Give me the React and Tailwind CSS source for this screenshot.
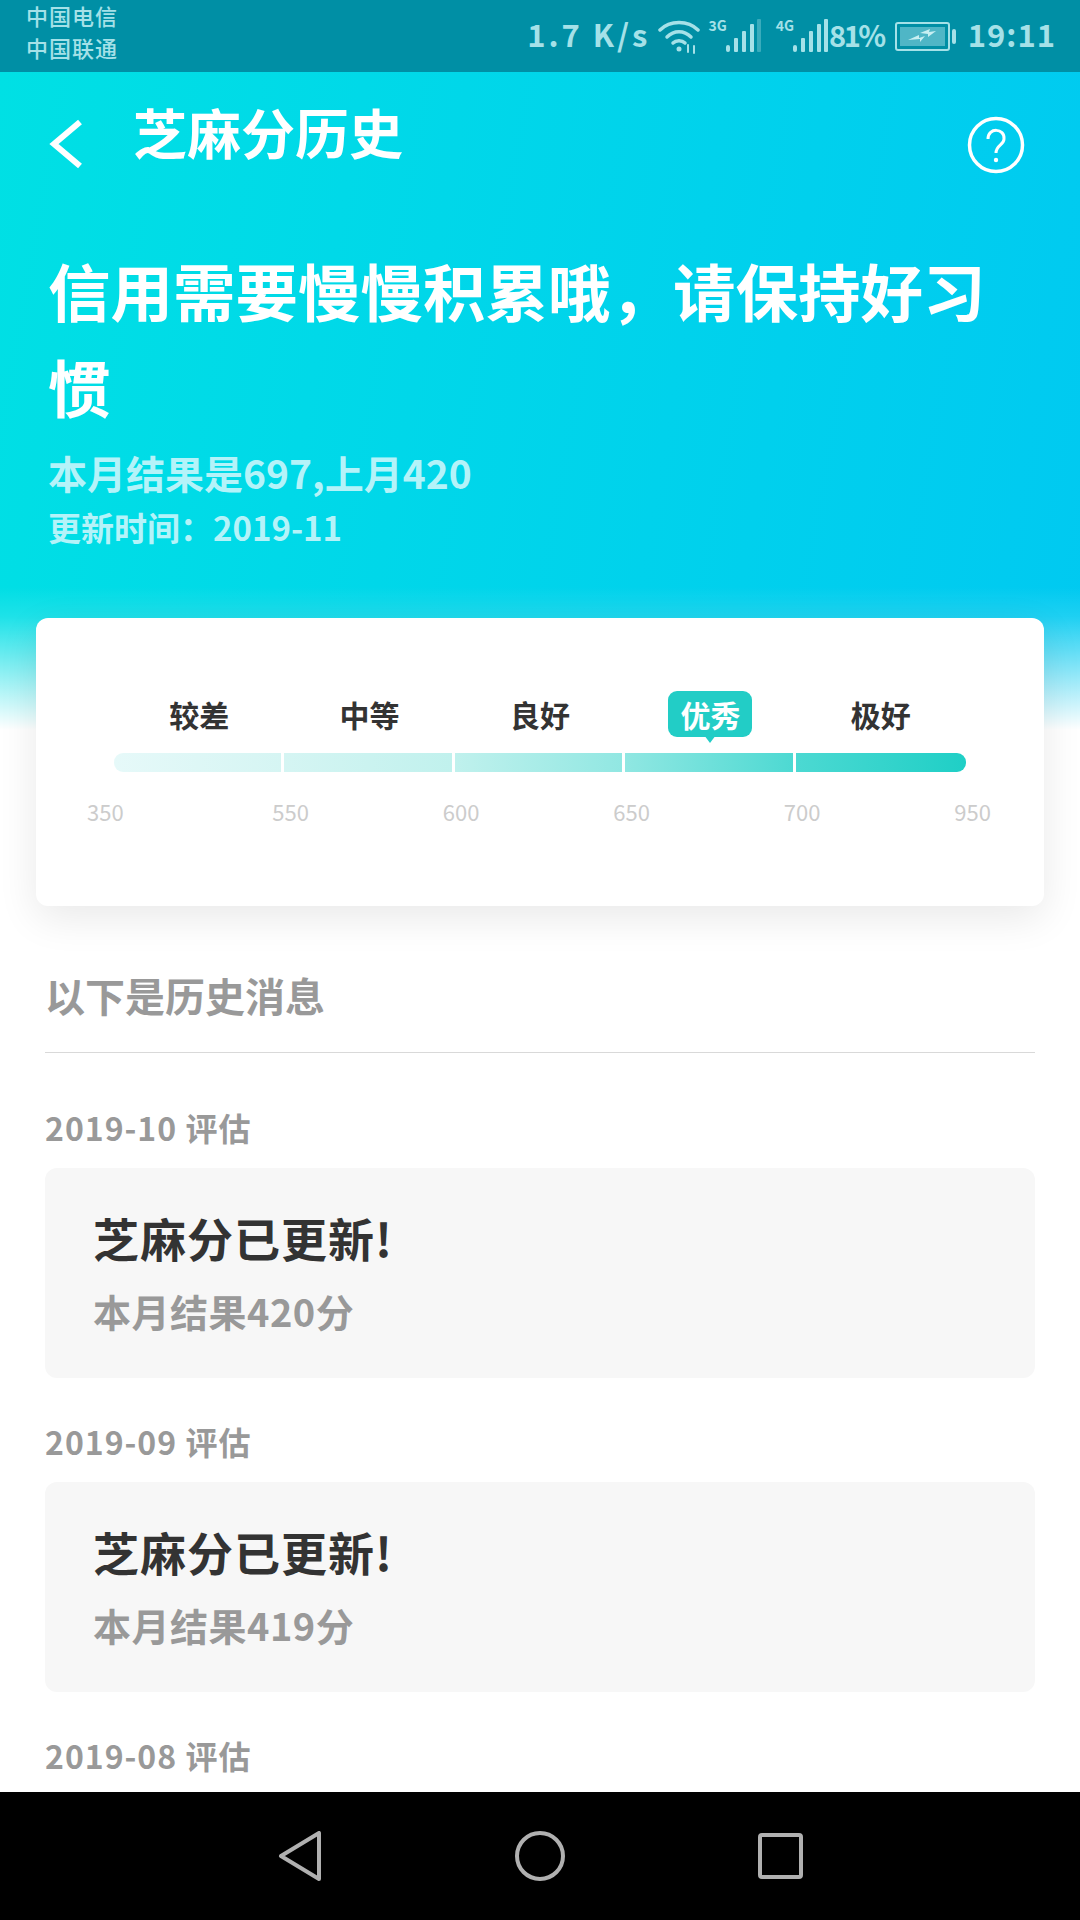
const history = [
  { month: "2019-10 评估", result: "本月结果420分" },
  { month: "2019-09 评估", result: "本月结果419分" },
];

const levels = ["较差", "中等", "良好", "优秀", "极好"];
const ticks = ["550", "600", "650", "700", "950"];

function SignalBars({ dimLast }) {
  return (
    <svg width="36" height="34" viewBox="0 0 36 34" fill="currentColor">
      <rect x="1" y="26" width="4" height="7" rx="2" />
      <rect x="9" y="19" width="4" height="14" rx="1" />
      <rect x="17" y="12" width="4" height="21" rx="1" />
      <rect x="25" y="5" width="4" height="28" rx="1" />
      <rect x="32" y="0" width="4" height="33" rx="1" opacity={dimLast ? 0.35 : 1} />
    </svg>
  );
}

function StatusBar() {
  return (
    <div className="h-[72px] shrink-0 bg-[#008fa5] flex items-center justify-between pl-[26px] pr-[24px] text-[#a5e1e8]">
      <div className="text-[22px] leading-[32px] font-medium tracking-[1px] mb-[10px]">
        <div>中国电信</div>
        <div>中国联通</div>
      </div>
      <div className="flex items-center">
        <span className="text-[31px] leading-none font-bold tracking-[3px] mb-[6px]">1.7 K/s</span>
        <svg className="ml-[8px]" width="42" height="36" viewBox="0 0 42 36" fill="none" stroke="currentColor" strokeWidth="3.5" strokeLinecap="round">
          <path d="M2 12 C12 2 30 2 40 12" />
          <path d="M9 19 C16 12 26 12 33 19" />
          <path d="M15 25 C18 22 24 22 27 25" />
          <circle cx="21" cy="31" r="2.5" fill="currentColor" stroke="none" />
          <path d="M30 34 L30 27 M36 28 L36 35" strokeWidth="2" />
        </svg>
        <span className="ml-[8px] self-start text-[14px] font-bold leading-none">3G</span>
        <span className="-ml-[2px]"><SignalBars dimLast /></span>
        <span className="ml-[15px] self-start text-[14px] font-bold leading-none">4G</span>
        <span className="-ml-[2px]"><SignalBars /></span>
        <span className="text-[29px] leading-none font-bold ml-[1px] tracking-[-2.5px] mb-[4px]">81%</span>
        <div className="ml-[11px] w-[55px] h-[29px] rounded-[3px] border-2 border-[#a5e1e8] p-[3px]">
          <div className="h-full w-[45px] bg-[#4fb6c6] flex items-center justify-center">
            <svg width="32" height="16" viewBox="0 0 32 16" fill="#c8eff2">
              <path d="M2 12 L13 7 L13 10 L19 8 L14 14 L14 11 Z" />
              <path d="M14 5 L24 1 L23 4 L30 3 L22 9 L22 6 Z" />
            </svg>
          </div>
        </div>
        <div className="ml-[2px] w-[4px] h-[15px] rounded-full bg-[#a5e1e8]" />
        <span className="ml-[12px] text-[31px] leading-none font-bold tracking-[1px] mb-[6px]">19:11</span>
      </div>
    </div>
  );
}

function Header() {
  return (
    <div className="h-[658px] shrink-0 pt-[24px] bg-[linear-gradient(to_bottom,rgba(255,255,255,0)_515px,rgba(255,255,255,0.12)_545px,rgba(255,255,255,1)_658px),linear-gradient(100deg,#00e0e4,#00c9f1)]">
      <div className="flex items-center justify-between pl-[48px] pr-[55px] h-[100px]">
        <div className="flex items-center">
          <svg className="mb-[4px]" width="36" height="50" viewBox="0 0 36 50" fill="none" stroke="white" strokeWidth="6">
            <path d="M32 3 L6 25 L32 47" />
          </svg>
          <h1 className="ml-[49px] mb-[28px] text-[54px] font-bold text-white leading-none">芝麻分历史</h1>
        </div>
        <svg className="mb-[2px]" width="58" height="58" viewBox="0 0 58 58" fill="none" stroke="white" strokeWidth="3.5">
          <circle cx="29" cy="29" r="26.5" />
          <path d="M21 23 C21 11 38 12 37 23 C37 29 29 29 29 37" strokeWidth="3" />
          <circle cx="29" cy="44" r="2.2" fill="white" stroke="none" />
        </svg>
      </div>
      <div className="pl-[48px] pr-[60px] mt-[46px]">
        <h2 className="text-[62.5px] leading-[96px] font-bold text-white">信用需要慢慢积累哦，请保持好习惯</h2>
        <p className="text-[39px] leading-[56px] font-bold text-[#b4f3f9] mt-[10px]">本月结果是697,上月420</p>
        <p className="text-[33px] leading-[48px] font-bold text-[#b4f3f9] mt-[3px]">更新时间：2019-11</p>
      </div>
    </div>
  );
}

function ScoreCard() {
  return (
    <div className="relative mx-[36px] -mt-[112px] h-[288px] shrink-0 rounded-[12px] bg-white shadow-[0_12px_40px_rgba(0,0,0,0.09)] px-[78px] pt-[73px]">
      <div className="grid grid-cols-5 h-[46px]">
        {levels.map((level, i) => (
          <div key={level} className="flex justify-center items-center">
            {i === 3 ? (
              <div className="relative w-[84px] h-[46px] rounded-[9px] bg-[#22cdc6] text-white text-[30px] font-bold flex items-center justify-center">
                {level}
                <div className="absolute left-1/2 -translate-x-1/2 top-[44px] w-0 h-0 border-l-[6px] border-r-[6px] border-t-[8px] border-l-transparent border-r-transparent border-t-[#22cdc6]" />
              </div>
            ) : (
              <span className="text-[30px] font-bold text-[#333333]">{level}</span>
            )}
          </div>
        ))}
      </div>
      <div className="mt-[16px] h-[19px] rounded-[9px] overflow-hidden grid grid-cols-5 bg-[linear-gradient(to_right,#e6f9f9,#d5f5f3_20%,#c0f1ed_40%,#90e7e2_60%,#4cd9d2_80%,#1fcfc6)]">
        {levels.map((level, i) => (
          <div key={level} className={i < 4 ? "border-r-[3px] border-white" : ""} />
        ))}
      </div>
      <div className="flex mt-[23px] -ml-[27px] text-[22px] leading-[32px] text-[#cccccc]">
        <span className="w-[40px] text-center">350</span>
        <div className="flex ml-[147px] gap-[130.5px]">
          {ticks.map((tick) => (
            <span key={tick} className="w-[40px] text-center">{tick}</span>
          ))}
        </div>
      </div>
    </div>
  );
}

function HistoryEntry({ item }) {
  return (
    <div className="mb-[40px]">
      <div className="text-[32px] leading-[46px] font-bold text-[#999999] tracking-[1px]">{item.month}</div>
      <div className="mt-[18px] h-[210px] rounded-[12px] bg-[#f7f7f7] pl-[48px] pt-[39px]">
        <div className="text-[46px] leading-[60px] font-bold text-[#333333] tracking-[1px]">芝麻分已更新!</div>
        <div className="mt-[16px] text-[38px] leading-[56px] font-bold text-[#999999] tracking-[0.5px]">{item.result}</div>
      </div>
    </div>
  );
}

function NavBar() {
  return (
    <div className="h-[128px] shrink-0 bg-black">
      <div className="flex items-center h-full pl-[278px]">
        <svg width="44" height="50" viewBox="0 0 44 50" fill="none" stroke="#b0b0b0" strokeWidth="4" strokeLinejoin="round">
          <path d="M41 2 L41 48 L3 25 Z" />
        </svg>
        <svg className="ml-[193px]" width="50" height="50" viewBox="0 0 50 50" fill="none" stroke="#b0b0b0" strokeWidth="4">
          <circle cx="25" cy="25" r="23" />
        </svg>
        <svg className="ml-[193px]" width="45" height="46" viewBox="0 0 45 46" fill="none" stroke="#b0b0b0" strokeWidth="4">
          <rect x="2" y="2" width="41" height="42" rx="2" />
        </svg>
      </div>
    </div>
  );
}

export default function App() {
  return (
    <div className="w-[1080px] h-[1920px] flex flex-col overflow-hidden bg-white font-['Noto_Sans_CJK_SC','Noto_Sans',sans-serif]">
      <StatusBar />
      <Header />
      <ScoreCard />
      <main className="flex-1 overflow-hidden px-[45px]">
        <div className="pt-[61px] h-[147px] border-b border-[#d9d9d9] text-[40px] leading-[56px] font-bold text-[#999999]">以下是历史消息</div>
        <div className="pt-[51px]">
          {history.map((item) => (
            <HistoryEntry key={item.month} item={item} />
          ))}
          <div className="text-[32px] leading-[46px] font-bold text-[#999999] tracking-[1px]">2019-08 评估</div>
        </div>
      </main>
      <NavBar />
    </div>
  );
}
